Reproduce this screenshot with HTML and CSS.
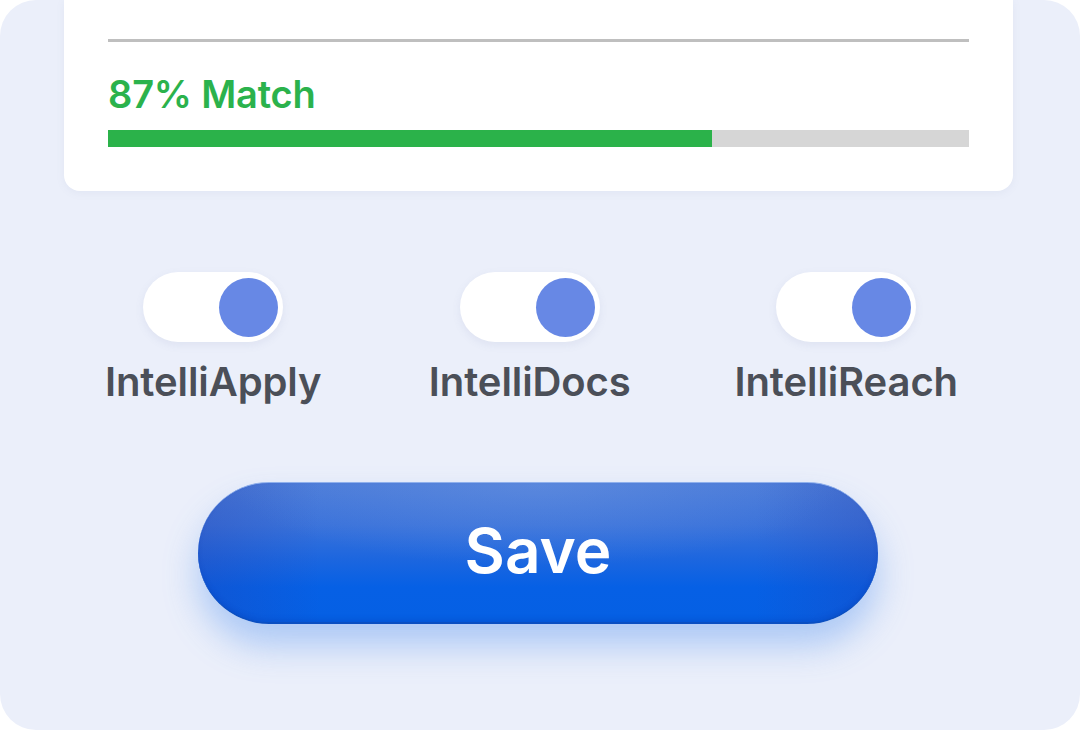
FILE: index.html
```html
<!DOCTYPE html>
<html>
<head>
<meta charset="utf-8">
<link rel="stylesheet" href="styles.css">
</head>
<body>
<div class="panel">
  <div class="card">
    <div class="divider"></div>
    <div class="match">87% Match</div>
    <div class="bar"><div class="fill" style="width:70.2%"></div></div>
  </div>
  <div class="toggles">
    <div class="item">
      <div class="toggle"><span class="knob"></span></div>
      <div class="label">IntelliApply</div>
    </div>
    <div class="item">
      <div class="toggle"><span class="knob"></span></div>
      <div class="label">IntelliDocs</div>
    </div>
    <div class="item">
      <div class="toggle"><span class="knob"></span></div>
      <div class="label">IntelliReach</div>
    </div>
  </div>
  <div class="actions">
    <button class="save">Save</button>
  </div>
</div>
</body>
</html>
```
FILE: styles.css
```css
* { box-sizing: border-box; }
html, body { margin: 0; padding: 0; background: #ffffff; }
body { width: 1080px; height: 730px; overflow: hidden; font-family: "Inter", "Noto Sans", sans-serif; }

.panel {
  width: 1080px;
  height: 730px;
  background: #ebeffa;
  border-radius: 36px;
  overflow: hidden;
  display: flex;
  flex-direction: column;
}

.card {
  margin-left: 64px;
  width: 949px;
  height: 191px;
  background: #ffffff;
  border-radius: 0 0 16px 16px;
  box-shadow: 0 2px 8px rgba(120, 130, 170, 0.08);
  padding: 39px 44px 0 44px;
  display: flex;
  flex-direction: column;
}

.divider {
  height: 3px;
  background: #bfbfbf;
}

.match {
  margin-top: 28px;
  height: 48px;
  line-height: 48px;
  font-size: 38px;
  font-weight: 600;
  color: #2bb24c;
  letter-spacing: -0.2px;
}

.bar {
  margin-top: 12px;
  height: 17px;
  background: #d6d6d6;
}
.fill { height: 100%; background: #2bb24a; }

.toggles {
  margin-top: 81px;
  margin-left: 55px;
  display: grid;
  grid-template-columns: repeat(3, 316.5px);
}

.item {
  display: flex;
  flex-direction: column;
  align-items: center;
}

.toggle {
  width: 140px;
  height: 70px;
  border-radius: 35px;
  background: #ffffff;
  box-shadow: 0 3px 8px rgba(110, 120, 170, 0.10);
  display: flex;
  justify-content: flex-end;
  align-items: center;
  padding-right: 5px;
}
.knob {
  width: 59px;
  height: 59px;
  border-radius: 50%;
  background: #6788e5;
}

.label {
  margin-top: 15px;
  font-size: 40px;
  line-height: 50px;
  font-weight: 600;
  color: #4b4f58;
  letter-spacing: -0.1px;
}

.actions {
  margin-top: 75px;
  margin-left: 198px;
}

.save {
  width: 680px;
  height: 142px;
  border-radius: 71px;
  border: none;
  border-top: 1px solid #8fb0ec;
  border-bottom: 2px solid #0a4fc2;
  color: #ffffff;
  font-family: "Inter", "Noto Sans", sans-serif;
  font-size: 62px;
  font-weight: 600;
  padding: 0 0 4px 0;
  background:
    radial-gradient(ellipse 45% 60% at 50% 0%, rgba(120, 160, 230, 0.35), rgba(120, 160, 230, 0) 100%),
    linear-gradient(90deg, rgba(40, 60, 170, 0.28) 0%, rgba(40, 60, 170, 0) 18%, rgba(40, 60, 170, 0) 82%, rgba(40, 60, 170, 0.28) 100%),
    linear-gradient(180deg, #4b7bd8 0%, #3a72da 30%, #1c66df 55%, #0660e5 75%, #0560e4 100%);
  box-shadow: 0 22px 34px rgba(70, 140, 240, 0.38), inset 0 -3px 4px rgba(0, 60, 180, 0.25);
}
```
